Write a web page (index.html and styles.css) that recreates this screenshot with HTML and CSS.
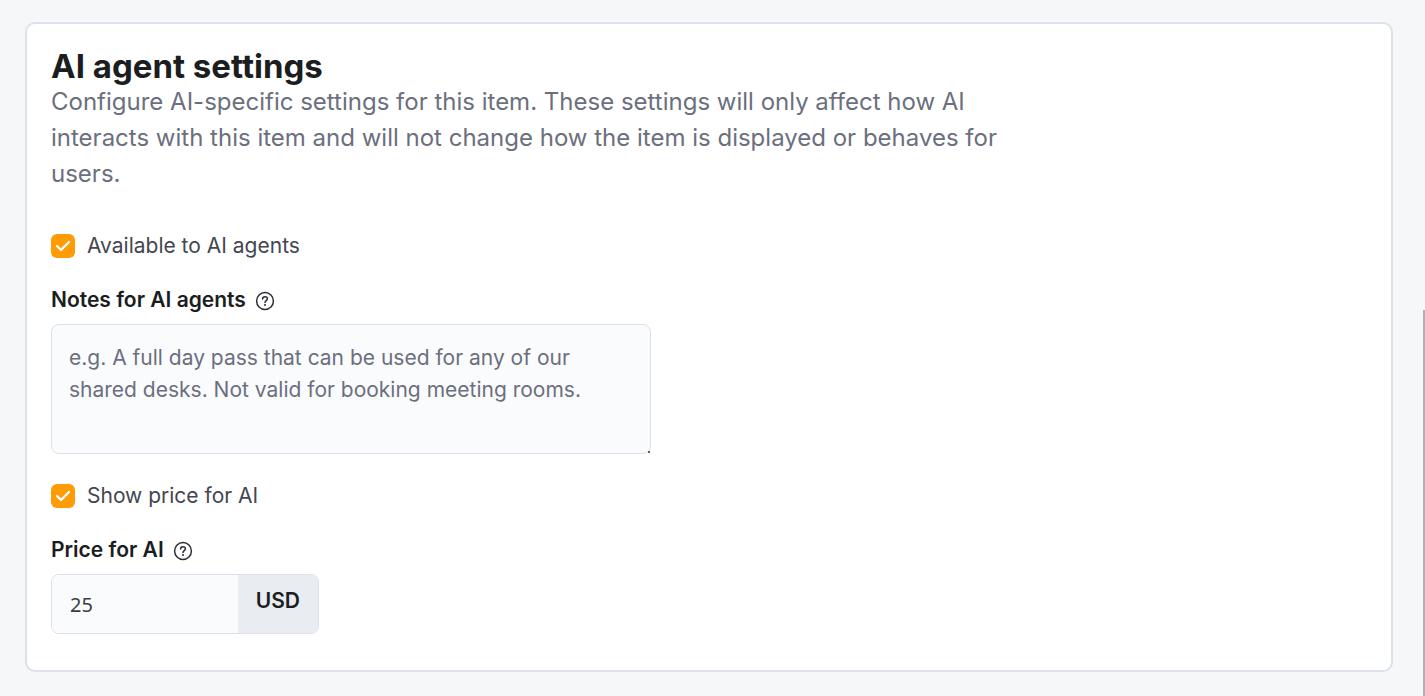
FILE: index.html
```html
<!DOCTYPE html>
<html lang="en">
<head>
<meta charset="utf-8">
<title>AI agent settings</title>
<link rel="stylesheet" href="styles.css">
</head>
<body>
<main class="page">
  <form class="card">
    <h1 class="title">AI agent settings</h1>
    <p class="intro">Configure AI-specific settings for this item. These settings will only affect how AI interacts with this item and will not change how the item is displayed or behaves for users.</p>
    <label class="check"><input class="checkbox" type="checkbox" checked>Available to AI agents</label>
    <div class="field">
      <div class="label-row">
        <label class="label" for="notes">Notes for AI agents</label>
        <button class="help" type="button" aria-label="Help: notes for AI agents"><svg class="help-icon" viewBox="0 0 20 20"><circle cx="10" cy="10" r="8.4"/><path d="M7.6 8C7.6 4.9 12.4 4.9 12.4 7.8C12.4 9.6 10 9.8 10 11.6"/><circle class="dot" cx="10" cy="14.1" r="1"/></svg></button>
      </div>
      <textarea class="notes" id="notes" placeholder="e.g. A full day pass that can be used for any of our shared desks. Not valid for booking meeting rooms."></textarea>
    </div>
    <label class="check"><input class="checkbox" type="checkbox" checked>Show price for AI</label>
    <div class="field">
      <div class="label-row">
        <label class="label" for="price">Price for AI</label>
        <button class="help" type="button" aria-label="Help: price for AI"><svg class="help-icon" viewBox="0 0 20 20"><circle cx="10" cy="10" r="8.4"/><path d="M7.6 8C7.6 4.9 12.4 4.9 12.4 7.8C12.4 9.6 10 9.8 10 11.6"/><circle class="dot" cx="10" cy="14.1" r="1"/></svg></button>
      </div>
      <div class="price-group">
        <input class="price" id="price" type="text" inputmode="decimal" value="25">
        <span class="currency">USD</span>
      </div>
    </div>
  </form>
</main>
<div class="scroll-thumb"></div>
</body>
</html>
```

FILE: styles.css
```css
* { box-sizing: border-box; }
body {
  margin: 0;
  background: #f5f7f9;
  color: #1b1d21;
  font-family: Inter, "Liberation Sans", sans-serif;
}
.page { padding: 22px 32px 24px 25px; }
.card {
  padding: 24px 24px 36px;
  background: #fff;
  border: 2px solid #dce1ec;
  border-radius: 10px;
}
.title { margin: 0; font-size: 33px; line-height: 36px; font-weight: 700; }
.intro {
  margin: 0 0 42px;
  max-width: 960px;
  color: #6b6f7e;
  font-size: 24px;
  line-height: 36px;
}
.check {
  display: flex;
  align-items: center;
  gap: 12px;
  width: fit-content;
  color: #44464f;
  font-size: 21px;
  line-height: 24px;
}
.checkbox {
  appearance: none;
  flex: none;
  width: 24px;
  height: 24px;
  margin: 0;
  border-radius: 6px;
  background: #ff9c05 url("data:image/svg+xml,%3Csvg xmlns='http://www.w3.org/2000/svg' viewBox='0 0 24 24' fill='none' stroke='white' stroke-width='2.4' stroke-linecap='round' stroke-linejoin='round'%3E%3Cpath d='M6 12l4 4L18 8'/%3E%3C/svg%3E") center / 24px no-repeat;
}
.field { margin: 28px 0 30px; }
.field:last-child { margin-bottom: 0; }
.label-row { display: flex; align-items: center; gap: 9px; margin-bottom: 10px; }
.label { font-size: 21px; line-height: 28px; font-weight: 600; }
.help { padding: 2px 0 0; border: 0; background: none; color: #2b2d33; }
.help-icon { display: block; width: 20px; height: 20px; fill: none; stroke: currentColor; stroke-width: 1.5; stroke-linecap: round; }
.dot { fill: currentColor; stroke: none; }
.notes {
  display: block;
  width: 600px;
  max-width: 100%;
  height: 130px;
  padding: 17px;
  border: 1px solid #dce0ea;
  border-radius: 8px;
  background: #fafbfd;
  color: #3b3e46;
  font: 21px/32px Inter, "Liberation Sans", sans-serif;
}
.notes::placeholder { color: #6b6f7e; }
.notes::-webkit-resizer {
  background: linear-gradient(#5c5f66, #5c5f66) right bottom / 2px 2px no-repeat;
}
.price-group {
  display: flex;
  width: 268px;
  height: 60px;
  border: 1px solid #dce0ea;
  border-radius: 8px;
  overflow: hidden;
}
.price {
  flex: 1;
  min-width: 0;
  padding: 2px 18px 0;
  border: 0;
  background: #fafbfd;
  color: #3b3e46;
  font: 20px/28px "Noto Sans", sans-serif;
}
.currency {
  padding: 12px 18px 0;
  background: #e9ecf1;
  font-size: 21px;
  line-height: 28px;
  font-weight: 600;
}
.scroll-thumb {
  position: fixed;
  top: 310px;
  right: 0;
  bottom: 0;
  width: 2px;
  background: #b0b0b6;
}
```
